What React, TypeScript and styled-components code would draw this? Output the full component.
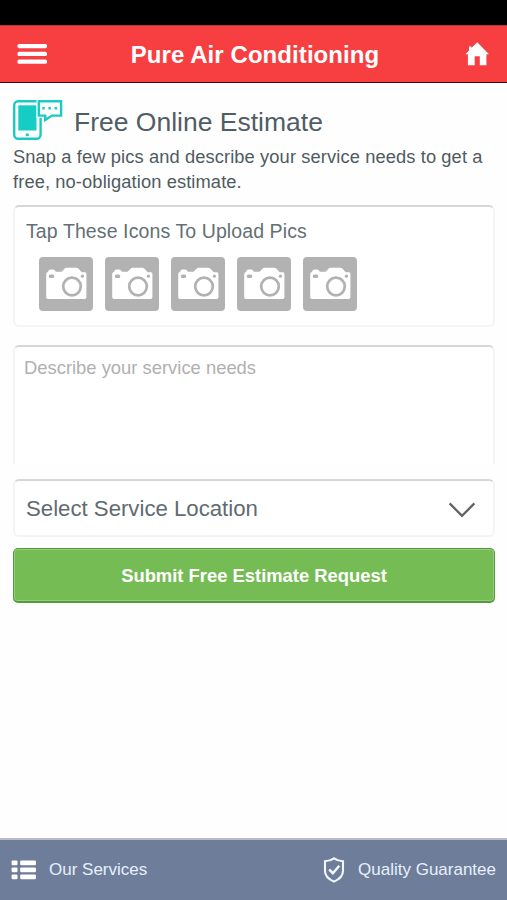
import React from "react";
import styled, { createGlobalStyle, css } from "styled-components";

const Global = createGlobalStyle`
  *, *::before, *::after { box-sizing: border-box; }
  html, body { margin: 0; padding: 0; background: #fefefe; }
  body { font-family: "Liberation Sans", Arial, Helvetica, sans-serif; }
  button, textarea { font-family: inherit; margin: 0; }
`;

const Screen = styled.div`
  width: 100%;
  height: 900px;
  display: flex;
  flex-direction: column;
  overflow: hidden;
  background: #fefefe;
`;

const StatusBar = styled.div`
  height: 25px;
  flex: none;
  background: #000;
`;

const Header = styled.header`
  height: 58px;
  flex: none;
  display: grid;
  grid-template-columns: 48px 1fr 48px;
  align-items: center;
  background: #f73e40;
  border-top: 1px solid #c53133;
  border-bottom: 1px solid #3a0c0d;
  color: #fff;
`;

const Title = styled.h1`
  margin: 0;
  padding: 1px 0 0 3px;
  text-align: center;
  font-size: 24px;
  line-height: 28px;
  font-weight: 700;
  letter-spacing: 0.07px;
  white-space: nowrap;
`;

const IconButton = styled.button<{ $side: "left" | "right" }>`
  display: flex;
  justify-content: ${(p) => (p.$side === "left" ? "flex-start" : "flex-end")};
  padding: ${(p) => (p.$side === "left" ? "0 0 0 17px" : "0 18px 0 0")};
  border: 0;
  background: none;
  color: inherit;
`;

const Icon = styled.svg`
  display: block;
  flex: none;
`;

const Content = styled.main`
  flex: 1;
  display: flex;
  flex-direction: column;
  padding: 16px 12px 0 13px;
  color: #5a686d;
`;

const Heading = styled.div`
  display: flex;
  align-items: flex-start;
  gap: 11px;
  height: 46px;
`;

const HeadingText = styled.h2`
  margin: 0;
  font-size: 26.5px;
  line-height: 32px;
  padding-top: 7px;
  font-weight: 400;
  color: #505d65;
  white-space: nowrap;
`;

const Intro = styled.p`
  margin: 0 -12px 11px 0;
  font-size: 18.3px;
  line-height: 24.5px;
  letter-spacing: 0.11px;
  color: #4e5b61;
`;

const field = css`
  border: 2px solid #f4f4f4;
  border-top-color: #d6d6d6;
  border-radius: 6px;
  background: #fff;
`;

const UploadCard = styled.section`
  ${field}
  height: 122px;
  padding: 12px 11px 0;
  margin-bottom: 18px;
`;

const CardTitle = styled.div`
  font-size: 19.5px;
  line-height: 24px;
  letter-spacing: 0.1px;
  color: #637075;
`;

const PhotoRow = styled.div`
  display: flex;
  gap: 12px;
  padding: 13.5px 0 0 13px;
`;

const PhotoTile = styled.button`
  width: 54px;
  height: 54px;
  padding: 0;
  border: 0;
  border-radius: 4px;
  background: #b2b2b2;
`;

const Description = styled.textarea`
  ${field}
  display: block;
  flex: none;
  width: 100%;
  height: 119px;
  padding: 9px 9px 0;
  margin-bottom: 15px;
  border-bottom: 0;
  border-radius: 6px 6px 0 0;
  resize: none;
  outline: none;
  overflow: hidden;
  font-size: 18.4px;
  line-height: 24px;
  &::placeholder { color: #b0b0b0; opacity: 1; }
`;

const Select = styled.button`
  ${field}
  flex: none;
  display: flex;
  align-items: center;
  justify-content: space-between;
  height: 58px;
  padding: 1px 17px 0 11px;
  margin-bottom: 11px;
  font-size: 22.2px;
  line-height: 28px;
  color: #606b71;
`;

const Submit = styled.button`
  flex: none;
  height: 55px;
  padding: 1px 0 0;
  border: 1px solid #539a45;
  border-bottom-width: 2px;
  border-radius: 5px;
  background: #76bc55;
  box-shadow: inset 0 0 0 1px #94cf79;
  color: #fff;
  font-size: 18.4px;
  line-height: 24px;
  font-weight: 700;
`;

const Footer = styled.footer`
  flex: none;
  height: 62px;
  display: flex;
  justify-content: space-between;
  align-items: center;
  padding: 0 11px;
  border-top: 2px solid #b9bdc5;
  background: #6e7d99;
`;

const FooterLink = styled.button<{ $gap: number }>`
  display: flex;
  align-items: center;
  gap: ${(p) => p.$gap}px;
  padding: 0;
  border: 0;
  background: none;
  color: #e6f0fd;
  font-size: 17px;
  line-height: 24px;
  white-space: nowrap;
`;

const MenuIcon = () => (
  <Icon width="31" height="22" viewBox="0 0 31 22" fill="#fff">
    {[1, 8.8, 16.6].map((y) => (
      <rect key={y} x="0.5" y={y} width="29.5" height="4.2" rx="1.6" />
    ))}
  </Icon>
);

const HomeIcon = () => (
  <Icon width="24" height="24" viewBox="0 0 24 24" fill="#fff">
    <path d="M12.2 .2 24 12.2H21.4V23.2H14.8V14.3H9.7V23.2H2.9V12.2H.4L4 8.5V4.4H6.4V6Z" />
  </Icon>
);

const EstimateIcon = () => (
  <Icon width="50" height="42" viewBox="0 0 50 42">
    <rect x="1.2" y="2.2" width="26.4" height="37.6" rx="4" fill="#fff" stroke="#1bcbc3" strokeWidth="2.4" />
    <rect x="5.3" y="6.3" width="18.2" height="25.2" fill="#16cdc4" />
    <rect x="12.7" y="34.4" width="3.2" height="2.8" rx="1" fill="#1bcbc3" />
    <path
      d="M25.8 2.2H48.3V16.6H39L32.2 21V16.6H25.8Z"
      fill="#fff"
      stroke="#fff"
      strokeWidth="4.5"
    />
    <path
      d="M25.8 2.2H48.1V16.6H39L32.2 21V16.6H25.8Z"
      fill="#fff"
      stroke="#1bcbc3"
      strokeWidth="2.4"
    />
    <g fill="#16cdc4">
      <rect x="29.2" y="7.9" width="2.6" height="2.6" rx=".6" />
      <rect x="35.4" y="7.9" width="2.6" height="2.6" rx=".6" />
      <rect x="41.6" y="7.9" width="2.6" height="2.6" rx=".6" />
    </g>
  </Icon>
);

const CameraIcon = () => (
  <Icon width="54" height="54" viewBox="0 0 54 54">
    <path
      d="M7.2 17Q7.2 15.4 9 15L9.8 13.3Q10.3 12.4 11.5 12.4H14.2Q15.4 12.4 16 13.4L16.8 14.7H22.6L25.2 11.9Q26.2 10.7 28 10.7H37Q38.8 10.7 39.8 11.9L42.2 14.8Q42.7 15.3 43.8 15.3H46Q47.4 15.4 47.4 17V40.2Q47.4 42 45.6 42H9Q7.2 42 7.2 40.2Z"
      fill="#fff"
    />
    <rect x="9.8" y="17.5" width="5.4" height="3.4" rx="1.5" fill="#b2b2b2" />
    <circle cx="43.4" cy="19.2" r="1.6" fill="#b2b2b2" />
    <circle cx="33" cy="29.5" r="8.8" fill="#fff" stroke="#b2b2b2" strokeWidth="2.7" />
  </Icon>
);

const ChevronIcon = () => (
  <Icon width="28" height="18" viewBox="0 0 28 18">
    <path d="M1.6 3.4 14 15.8 26.4 3.4" fill="none" stroke="#606469" strokeWidth="2.3" />
  </Icon>
);

const ListIcon = () => (
  <Icon width="26" height="20" viewBox="0 0 26 20" fill="#fff">
    {[0.4, 7.4, 14.4].map((y) => (
      <React.Fragment key={y}>
        <rect x="0.6" y={y} width="5.9" height="4.9" rx="1.2" />
        <rect x="9.2" y={y} width="15.8" height="4.9" rx="1.2" />
      </React.Fragment>
    ))}
  </Icon>
);

const ShieldIcon = () => (
  <Icon width="22" height="26" viewBox="0 0 22 26" fill="none" stroke="#f2f8ff">
    <path
      d="M11 1.4Q7 4.2 2 4.2V14C2 19.5 6.4 22.6 11 24.6C15.6 22.6 20 19.5 20 14V4.2Q15 4.2 11 1.4Z"
      strokeWidth="2.1"
    />
    <path d="M6.2 12.5 9.9 16.2 16.3 8.7" strokeWidth="2.5" />
  </Icon>
);

export default function App() {
  return (
    <>
      <Global />
      <Screen>
        <StatusBar />
        <Header>
          <IconButton $side="left" aria-label="Menu">
            <MenuIcon />
          </IconButton>
          <Title>Pure Air Conditioning</Title>
          <IconButton $side="right" aria-label="Home">
            <HomeIcon />
          </IconButton>
        </Header>
        <Content>
          <Heading>
            <EstimateIcon />
            <HeadingText>Free Online Estimate</HeadingText>
          </Heading>
          <Intro>
            Snap a few pics and describe your service needs to get a
            <br />
            free, no-obligation estimate.
          </Intro>
          <UploadCard>
            <CardTitle>Tap These Icons To Upload Pics</CardTitle>
            <PhotoRow>
              {[1, 2, 3, 4, 5].map((n) => (
                <PhotoTile key={n} aria-label={`Upload photo ${n}`}>
                  <CameraIcon />
                </PhotoTile>
              ))}
            </PhotoRow>
          </UploadCard>
          <Description placeholder="Describe your service needs" />
          <Select>
            Select Service Location
            <ChevronIcon />
          </Select>
          <Submit>Submit Free Estimate Request</Submit>
        </Content>
        <Footer>
          <FooterLink $gap={12}>
            <ListIcon />
            Our Services
          </FooterLink>
          <FooterLink $gap={13}>
            <ShieldIcon />
            Quality Guarantee
          </FooterLink>
        </Footer>
      </Screen>
    </>
  );
}
